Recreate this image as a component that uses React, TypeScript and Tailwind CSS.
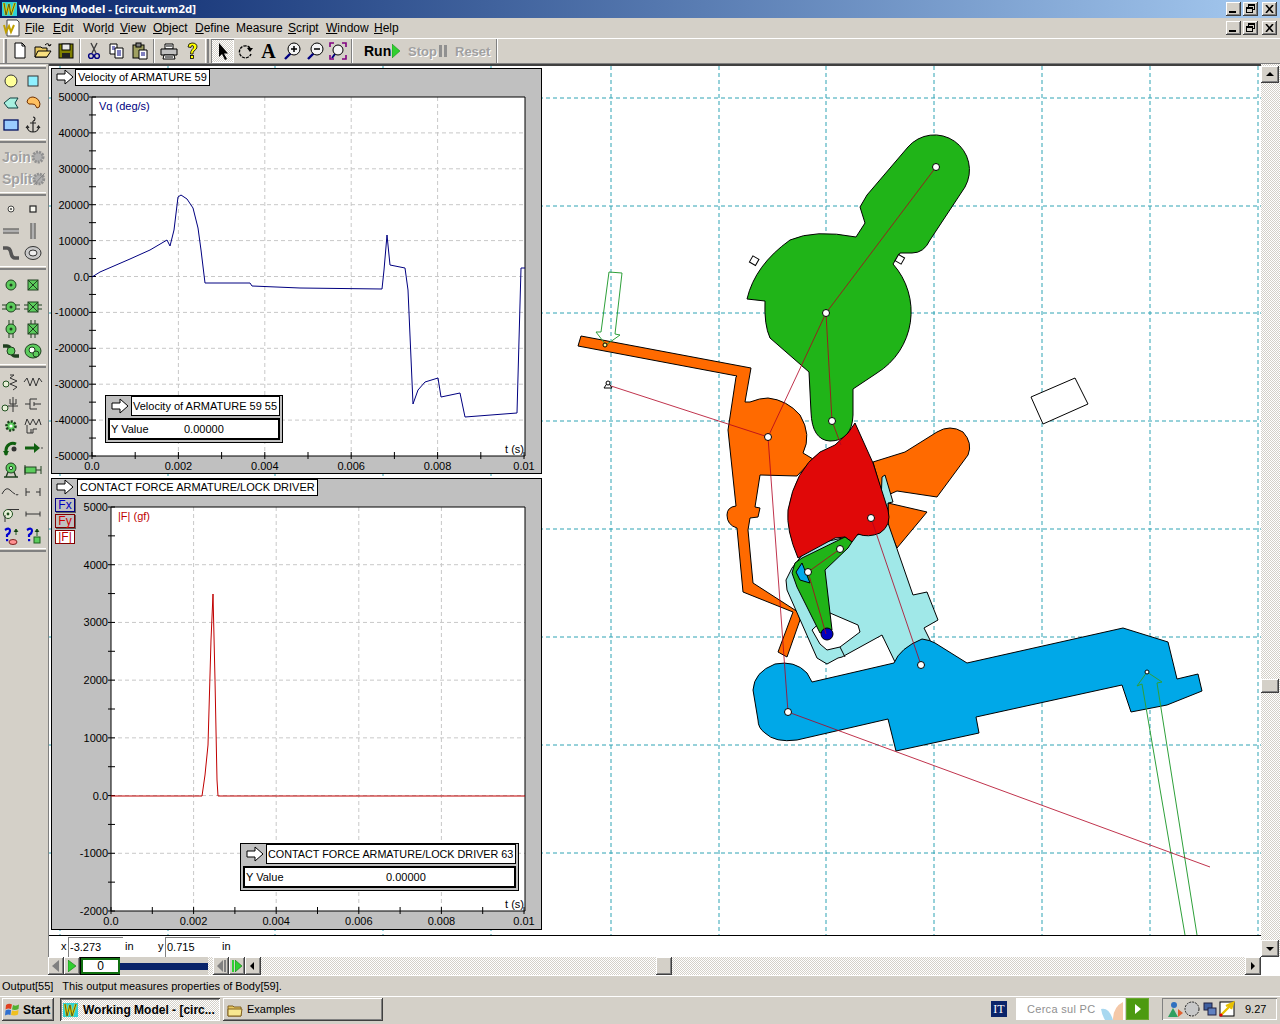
import type { ReactNode } from "react";

const raised = "bg-[#d4d0c8] shadow-[inset_-1px_-1px_0_#404040,inset_1px_1px_0_#ffffff,inset_-2px_-2px_0_#808080]";
const grip = "h-[4px] bg-[#d4d0c8] border-t border-white border-b-2 border-b-[#808080]";
const dither = "bg-[repeating-conic-gradient(#d4d0c8_0_25%,#ffffff_0_50%)] bg-[length:2px_2px]";

type Pt = [number, number];

function poly(points: Pt[]) {
  return points.map((p) => p.join(",")).join(" ");
}

function WmLogo({ size = 16 }: { size?: number }) {
  return (
    <svg width={size} height={size} viewBox="0 0 16 16">
      <rect x="0" y="1" width="15" height="14" fill="#30d0d8" />
      <path d="M2 2 L4 14 L7 3 L9 14 L13 2" fill="none" stroke="#e8d000" strokeWidth="2.4" />
      <path d="M2 2 L4 14 L7 3 L9 14 L13 2" fill="none" stroke="#203020" strokeWidth="0.7" />
    </svg>
  );
}

function WinButtons() {
  return (
    <div className="flex items-center gap-[2px]">
      <div className={`${raised} w-[15px] h-[14px] relative`}>
        <div className="absolute left-[3px] bottom-[3px] w-[7px] h-[2px] bg-black" />
      </div>
      <div className={`${raised} w-[15px] h-[14px] relative`}>
        <div className="absolute left-[5px] top-[2px] w-[7px] h-[6px] border border-black border-t-2" />
        <div className="absolute left-[3px] top-[5px] w-[7px] h-[6px] border border-black border-t-2 bg-[#d4d0c8]" />
      </div>
      <div className={`${raised} w-[15px] h-[14px] ml-[2px] flex items-center justify-center`}>
        <svg width="9" height="8" viewBox="0 0 9 8">
          <path d="M1 0 L8 8 M8 0 L1 8" stroke="#000" strokeWidth="1.6" />
        </svg>
      </div>
    </div>
  );
}

const menus = [
  { pre: "", u: "F", post: "ile", w: "w-[28px]" },
  { pre: "", u: "E", post: "dit", w: "w-[30px]" },
  { pre: "Wor", u: "l", post: "d", w: "w-[37px]" },
  { pre: "", u: "V", post: "iew", w: "w-[33px]" },
  { pre: "", u: "O", post: "bject", w: "w-[42px]" },
  { pre: "", u: "D", post: "efine", w: "w-[41px]" },
  { pre: "Measure", u: "", post: "", w: "w-[52px]" },
  { pre: "", u: "S", post: "cript", w: "w-[38px]" },
  { pre: "", u: "W", post: "indow", w: "w-[48px]" },
  { pre: "", u: "H", post: "elp", w: "w-[30px]" },
];

function Icon({ children, w = 20 }: { children: ReactNode; w?: number }) {
  return (
    <svg width={w} height="20" viewBox="0 0 20 20">
      {children}
    </svg>
  );
}

function ToolBtn({ children, active }: { children: ReactNode; active?: boolean }) {
  return (
    <div
      className={`w-[23px] h-[24px] flex items-center justify-center ${
        active ? `${dither} shadow-[inset_1px_1px_0_#808080,inset_-1px_-1px_0_#ffffff]` : ""
      }`}
    >
      {children}
    </div>
  );
}

function Sep({ w }: { w: string }) {
  return (
    <div className={`${w} h-[24px] flex justify-center`}>
      <div className="w-[2px] h-full border-l border-[#808080] border-r border-r-white" />
    </div>
  );
}

function Grip({ w }: { w: string }) {
  return (
    <div className={`${w} h-[24px] flex justify-center`}>
      <div className="w-[4px] h-full bg-[#d4d0c8] border-l border-white border-r-2 border-r-[#808080]" />
    </div>
  );
}

function TopToolbar() {
  return (
    <div className="h-[26px] flex items-center border-t border-white border-b border-b-[#808080] pl-[2px]">
      <Grip w="w-[6px]" />
      <ToolBtn>
        <Icon>
          <path d="M5 2 H12 L15 5 V17 H5 Z" fill="#fff" stroke="#000" />
          <path d="M12 2 V5 H15" fill="none" stroke="#000" />
        </Icon>
      </ToolBtn>
      <ToolBtn>
        <Icon>
          <path d="M2 6 H8 L9 7 H14 V16 H2 Z" fill="#e8c860" stroke="#000" />
          <path d="M5 10 H18 L14 16 H2 Z" fill="#f8e080" stroke="#000" />
          <path d="M12 4 Q15 1 17 5 M17 5 L18 3 M17 5 L15 4" fill="none" stroke="#000" />
        </Icon>
      </ToolBtn>
      <ToolBtn>
        <Icon>
          <rect x="3" y="3" width="14" height="14" fill="#808000" stroke="#000" />
          <rect x="6" y="3" width="8" height="6" fill="#e8e8e8" stroke="#000" />
          <rect x="6" y="12" width="8" height="5" fill="#222" />
        </Icon>
      </ToolBtn>
      <Sep w="w-[5px]" />
      <ToolBtn>
        <Icon>
          <path d="M7 2 L12 12 M13 2 L8 12" stroke="#404040" strokeWidth="1.4" />
          <circle cx="7" cy="15" r="2.4" fill="none" stroke="#000080" strokeWidth="1.4" />
          <circle cx="13" cy="15" r="2.4" fill="none" stroke="#000080" strokeWidth="1.4" />
        </Icon>
      </ToolBtn>
      <ToolBtn>
        <Icon>
          <path d="M3 3 H10 V13 H3 Z" fill="#fff" stroke="#000" />
          <path d="M8 7 H16 V17 H8 Z" fill="#fff" stroke="#000" />
          <path d="M10 10 H14 M10 12 H14 M10 14 H14 M5 6 H8 M5 8 H8" stroke="#000080" />
        </Icon>
      </ToolBtn>
      <ToolBtn>
        <Icon>
          <rect x="3" y="4" width="11" height="13" fill="#a0a060" stroke="#000" />
          <rect x="6" y="2" width="5" height="4" fill="#808080" stroke="#000" />
          <path d="M9 9 H17 V18 H9 Z" fill="#fff" stroke="#000" />
          <path d="M11 12 H15 M11 14 H15" stroke="#000080" />
        </Icon>
      </ToolBtn>
      <Sep w="w-[6px]" />
      <ToolBtn>
        <Icon>
          <path d="M6 3 H14 V8 H6 Z" fill="#fff" stroke="#000" />
          <path d="M2 8 H18 V14 H2 Z" fill="#c0c0c0" stroke="#000" />
          <path d="M5 14 H15 L16 18 H4 Z" fill="#fff" stroke="#000" />
          <path d="M7 5 H13 M6 16 H14" stroke="#000" />
        </Icon>
      </ToolBtn>
      <ToolBtn>
        <Icon>
          <path
            d="M6 6 Q6 2 10 2 Q15 2 15 6 Q15 8 12 10 Q11 11 11 13 H8.5 Q8.5 10 10 8.5 Q11.5 7.5 11.5 6 Q11.5 4.5 10 4.5 Q9 4.5 9 6.5 Z"
            fill="#ffff00"
            stroke="#000"
            strokeWidth="0.8"
          />
          <rect x="8.5" y="14.5" width="3" height="3" fill="#ffff00" stroke="#000" strokeWidth="0.8" />
        </Icon>
      </ToolBtn>
      <Grip w="w-[8px]" />
      <ToolBtn active>
        <Icon>
          <path d="M6 2 V16 L9 13 L12 19 L14 18 L11 12.5 H15 Z" fill="#000" />
        </Icon>
      </ToolBtn>
      <ToolBtn>
        <Icon>
          <path d="M14 7 A6 6 0 1 0 15 13" fill="none" stroke="#000" strokeWidth="1.4" strokeDasharray="3 1" />
          <path d="M11 7 H17 L14 11 Z" fill="#000" />
        </Icon>
      </ToolBtn>
      <ToolBtn>
        <span className="[font-family:'Liberation_Serif',serif] font-bold text-[20px] leading-none text-black">A</span>
      </ToolBtn>
      <ToolBtn>
        <Icon>
          <path d="M9 12 L3 18" stroke="#000080" strokeWidth="2.4" />
          <circle cx="12" cy="8" r="6" fill="#f4f4f4" stroke="#000" />
          <path d="M9 8 H15 M12 5 V11" stroke="#000" strokeWidth="1.5" />
        </Icon>
      </ToolBtn>
      <ToolBtn>
        <Icon>
          <path d="M9 12 L3 18" stroke="#000080" strokeWidth="2.4" />
          <circle cx="12" cy="8" r="6" fill="#f4f4f4" stroke="#000" />
          <path d="M9 8 H15" stroke="#000" strokeWidth="1.5" />
        </Icon>
      </ToolBtn>
      <ToolBtn>
        <Icon>
          <path d="M7 13 L4 17" stroke="#000080" strokeWidth="2" />
          <circle cx="10" cy="9" r="5" fill="#f4f4f4" stroke="#000" />
          <path d="M2 6 V2 H6 M14 2 H18 V6 M18 14 V18 H14 M6 18 H2 V14" fill="none" stroke="#800080" strokeWidth="1.6" />
        </Icon>
      </ToolBtn>
      <Sep w="w-[6px]" />
      <div className="ml-[9px] flex items-center gap-[1px] text-[14px] font-bold leading-none w-[44px]">
        <span>Run</span>
        <svg width="8" height="14" viewBox="0 0 8 14">
          <path d="M0 0 L8 7 L0 14 Z" fill="#30d030" stroke="#108010" strokeWidth="0.5" />
        </svg>
      </div>
      <div className="flex items-center gap-[1px] text-[13px] font-bold leading-none w-[47px] text-[#a0a0a0] [text-shadow:1px_1px_0_#ffffff]">
        <span>Stop</span>
        <div className="w-[3px] h-[12px] ml-[1px] bg-[#909090]" />
        <div className="w-[3px] h-[12px] ml-[1px] bg-[#909090]" />
      </div>
      <div className="text-[13px] font-bold leading-none w-[40px] text-[#a0a0a0] [text-shadow:1px_1px_0_#ffffff]">Reset</div>
      <Sep w="w-[4px]" />
    </div>
  );
}

const G = "#5ccc5c";
const shapeTools: ReactNode[] = [
  <circle key="a" cx="10" cy="10" r="6" fill="#ffff99" stroke="#333" />,
  <rect key="b" x="5" y="5" width="10" height="10" fill="#8ff0ff" stroke="#333" />,
  <polygon key="c" points="3,10 9,5 17,5 14,10 17,15 7,15" fill="#a8f0e0" stroke="#104040" />,
  <path key="d" d="M4 9 Q5 4 10 4 Q16 5 17 11 Q17 15 14 15 Q12 10 9 11 Q5 12 4 9 Z" fill="#ffc060" stroke="#703000" />,
  <rect key="e" x="3" y="5" width="14" height="10" fill="#99ccff" stroke="#001060" strokeWidth="1.3" />,
  <path key="f" d="M10 6 V17 M7 8 H13 M4 12 Q5 17 10 17 Q15 17 16 12 M3 13 L4.5 11 L6 13 M14 13 L15.5 11 L17 13 M10 2 A2 2 0 1 1 9.9 6" fill="none" stroke="#222" strokeWidth="1.2" />,
];

const jointTools: ReactNode[] = [
  <g key="a"><circle cx="10" cy="10" r="3" fill="#f8f8f0" stroke="#444" /><circle cx="10" cy="10" r="1" fill="#444" /></g>,
  <rect key="b" x="7" y="7" width="6" height="6" fill="#f8f8f0" stroke="#222" strokeWidth="1.2" />,
  <g key="c"><rect x="2" y="8.5" width="16" height="3" fill="#b0b0b0" /><path d="M2 8 H18 M2 12 H18" stroke="#444" /></g>,
  <g key="d"><rect x="8.5" y="2" width="3" height="16" fill="#b0b0b0" /><path d="M8 2 V18 M12 2 V18" stroke="#444" /></g>,
  <path key="e" d="M2 5 H6 Q9 5 10 10 Q11 15 14 15 H18" fill="none" stroke="#555" strokeWidth="3.6" />,
  <g key="f"><ellipse cx="10" cy="10" rx="8" ry="6.5" fill="#c8c8c8" stroke="#333" /><ellipse cx="10" cy="10" rx="4" ry="3" fill="#eee" stroke="#333" /></g>,
];

const driverTools: ReactNode[] = [
  <g key="a"><circle cx="10" cy="10" r="5" fill={G} stroke="#204020" /><circle cx="10" cy="10" r="1.5" fill="#204020" /></g>,
  <g key="b"><rect x="5" y="5" width="10" height="10" fill={G} stroke="#204020" /><path d="M5 5 L15 15 M15 5 L5 15" stroke="#204020" /></g>,
  <g key="c"><path d="M1 8 H19 M1 12 H19" stroke="#204020" /><circle cx="10" cy="10" r="5" fill={G} stroke="#204020" /><circle cx="10" cy="10" r="1.5" fill="#204020" /></g>,
  <g key="d"><path d="M1 8 H19 M1 12 H19" stroke="#204020" /><rect x="5" y="5" width="10" height="10" fill={G} stroke="#204020" /><path d="M5 5 L15 15 M15 5 L5 15" stroke="#204020" /></g>,
  <g key="e"><path d="M8 1 V19 M12 1 V19" stroke="#204020" /><circle cx="10" cy="10" r="5" fill={G} stroke="#204020" /><circle cx="10" cy="10" r="1.5" fill="#204020" /></g>,
  <g key="f"><path d="M8 1 V19 M12 1 V19" stroke="#204020" /><rect x="5" y="5" width="10" height="10" fill={G} stroke="#204020" /><path d="M5 5 L15 15 M15 5 L5 15" stroke="#204020" /></g>,
  <g key="g"><path d="M2 5 H6 Q9 5 10 10 Q11 15 14 15 H18" fill="none" stroke="#204020" strokeWidth="3.4" /><circle cx="10" cy="10" r="4" fill={G} stroke="#204020" /></g>,
  <g key="h"><ellipse cx="10" cy="10" rx="8" ry="7" fill={G} stroke="#204020" /><circle cx="9" cy="9" r="3" fill="#fff" stroke="#204020" /><circle cx="13" cy="13" r="3" fill={G} stroke="#204020" /></g>,
];

const forceTools: ReactNode[] = [
  <g key="a"><circle cx="5" cy="12" r="3" fill="#e8f0d8" stroke="#205020" /><path d="M9 3 H13 L9 6 L16 9 L9 12 L16 15 L12 18" fill="none" stroke="#333" /></g>,
  <path key="b" d="M1 10 L4 6 L7 14 L10 6 L13 14 L16 6 L19 10" fill="none" stroke="#333" />,
  <g key="c"><circle cx="4" cy="14" r="3" fill="#e8f0d8" stroke="#205020" /><path d="M7 12 H17 M12 3 V12 M9 5 V10 H15 V5 M12 12 V18" fill="none" stroke="#333" /></g>,
  <path key="d" d="M2 10 H7 M7 5 V15 M7 5 H14 M7 15 H14 M11 8 V12 M11 10 H18" fill="none" stroke="#333" />,
  <g key="e"><circle cx="10" cy="10" r="4.5" fill={G} stroke="#204020" strokeWidth="2.6" strokeDasharray="2 1.4" /><circle cx="10" cy="10" r="1.6" fill="#fff" /></g>,
  <path key="f" d="M2 9 L4 3 L7 9 L10 3 L13 9 L16 3 L18 9 M4 9 V17 H10 V13 H14 M8 13 V17" fill="none" stroke="#333" />,
  <g key="g"><path d="M15 6 A7 7 0 0 0 5 12 L5 17" fill="none" stroke="#106010" strokeWidth="3" /><path d="M2 13 H8 L5 18 Z" fill="#106010" /><circle cx="13" cy="11" r="2.5" fill="#333" /></g>,
  <g key="h"><path d="M2 10 H12" stroke="#106010" strokeWidth="3" /><path d="M11 5 L17 10 L11 15 Z" fill="#106010" /><circle cx="19" cy="10" r="0.8" fill="#333" /></g>,
  <g key="i"><circle cx="10" cy="8" r="5" fill={G} stroke="#204020" /><circle cx="10" cy="8" r="1.6" fill="#fff" stroke="#204020" /><path d="M3 17 H17 M5 17 L7 12 M15 17 L13 12" stroke="#204020" strokeWidth="1.4" /></g>,
  <g key="j"><rect x="2" y="7" width="11" height="6" fill={G} stroke="#204020" /><path d="M13 10 H18 M18 6 V14 M2 5 V15" stroke="#204020" /></g>,
  <path key="k" d="M1 12 Q5 4 9 8 Q12 11 14 12 M15 12 A1 1 0 1 0 17 12" fill="none" stroke="#333" />,
  <path key="l" d="M3 6 V14 M3 10 H7 M17 6 V14 M13 10 H17" fill="none" stroke="#333" />,
  <g key="m"><circle cx="7" cy="10" r="4.5" fill="#e8f0d8" stroke="#205020" /><circle cx="7" cy="10" r="1.4" fill="#205020" /><path d="M7 5.5 H18 M4 11 V18" stroke="#333" /></g>,
  <path key="n" d="M3 10 H17 M3 7.5 V12.5 M17 7.5 V12.5" fill="none" stroke="#333" />,
  <g key="o"><path d="M4 4 Q9 1 9 5 Q9 7 6 9 V11" fill="none" stroke="#0000d0" strokeWidth="2.2" /><rect x="5" y="13" width="2.2" height="2.2" fill="#0000d0" /><ellipse cx="12" cy="16" rx="4" ry="2.5" fill="#ff9090" stroke="#802020" /><path d="M15 3 V9 M13 6 L15 3 L17 6" stroke="#206020" /></g>,
  <g key="p"><path d="M4 4 Q9 1 9 5 Q9 7 6 9 V11" fill="none" stroke="#0000d0" strokeWidth="2.2" /><rect x="5" y="13" width="2.2" height="2.2" fill="#0000d0" /><rect x="11" y="11" width="6" height="6" fill={G} stroke="#206020" /><path d="M14 3 V10 M12 6 L14 3 L16 6" stroke="#206020" /></g>,
];

function ToolGrid({ items }: { items: ReactNode[] }) {
  return (
    <div className="grid grid-cols-[22px_22px] auto-rows-[22px] place-items-center">
      {items.map((item, i) => (
        <Icon key={i}>{item}</Icon>
      ))}
    </div>
  );
}

function Toolbox() {
  return (
    <div className="w-[48px] shrink-0 pt-[1px] pr-[2px]">
      <div className={grip} />
      <div className="pt-[1px] pb-[3px]">
        <ToolGrid items={shapeTools} />
      </div>
      <div className={grip} />
      <div className="pt-[3px] pb-[2px] text-[14px] font-bold text-[#a0a0a0] [text-shadow:1px_1px_0_#ffffff]">
        <div className="h-[22px] flex items-center pl-[2px]">
          Join
          <svg width="14" height="14" viewBox="0 0 14 14">
            <circle cx="7" cy="7" r="5" fill="#b0b0b0" stroke="#909090" strokeDasharray="2 1" strokeWidth="3" />
          </svg>
        </div>
        <div className="h-[22px] flex items-center pl-[2px]">
          Split
          <svg width="14" height="14" viewBox="0 0 14 14">
            <circle cx="7" cy="7" r="5" fill="#b0b0b0" stroke="#909090" strokeDasharray="2 1" strokeWidth="3" />
            <path d="M2 13 L13 1" stroke="#808080" />
          </svg>
        </div>
      </div>
      <div className={grip} />
      <div className="pt-[2px] pb-[2px]">
        <ToolGrid items={jointTools} />
      </div>
      <div className={grip} />
      <div className="pt-[4px] pb-[2px]">
        <ToolGrid items={driverTools} />
      </div>
      <div className={grip} />
      <div className="pt-[3px] pb-[1px]">
        <ToolGrid items={forceTools} />
      </div>
      <div className={grip} />
    </div>
  );
}

const pinsWhite: Pt[] = [
  [936, 167],
  [826, 313],
  [832, 421],
  [768, 437],
  [871, 518],
  [840, 549],
  [808, 572],
  [921, 665],
  [788, 712],
];

const bodyGreen =
  "M908 147 A35 35 0 0 1 965 187 L930 240 Q924 253 912 253 L900 253 L893 264 A72 72 0 0 1 877 373 L853 389 L853 415 Q852 441 830 441 Q812 440 811 412 L809 372 L770 338 Q764 325 765 301 L747 299 Q755 265 790 240 Q815 229 856 237 L865 223 L860 207 L867 195 Z";
const bodyRed =
  "M855 423 L873 463 L888 510 Q892 525 880 533 Q868 538 858 534 L852 542 L845 537 L835 538 L798 558 Q786 530 788 510 Q795 470 820 452 L835 445 L848 433 Z";
const orangeLeft =
  "M581 336 L751 368 L745 402 L750 402 Q760 398 768 398 Q787 400 800 415 Q812 435 803 453 L813 459 L797 476 L760 475 L755 507 L760 508 L758 517 L750 518 L748 530 L753 583 L798 612 L800 620 L787 657 L778 652 L793 612 L743 592 L737 528 Q727 525 727 515 Q727 507 736 506 L728 430 L736 377 L737 376 L578 346 Z";
const orangeRight =
  "M873 462 L905 452 L937 432 Q950 424 963 432 Q973 443 968 455 L937 497 L897 491 L888 495 L880 487 Z";
const cyanBody =
  "M882 477 L885 475 L893 502 L888 503 L888 523 L913 595 L927 592 L938 620 L924 628 L930 640 L930 665 L895 662 L882 635 L842 657 L838 658 L827 664 L817 658 L787 590 L786 580 L792 568 L810 545 L880 530 Z";
const cutout = "M830 613 L858 625 L860 632 L840 647 L827 650 L820 644 L812 630 Z";
const greenLever =
  "M845 537 L852 542 L848 548 L825 570 L832 630 L820 633 L797 587 L792 573 L795 563 L802 558 Z";
const bodyBlue =
  "M812 682 L894 663 Q900 648 922 639 Q930 640 935 643 L967 663 L1123 628 L1168 642 L1177 679 L1198 674 L1202 691 L1167 705 L1131 712 L1122 685 L976 717 L979 733 L896 751 L888 719 L797 740 Q775 743 765 733 Q758 728 758 720 L753 690 Q754 672 775 664 Q795 660 807 673 Z";

function Mechanism() {
  const vx = [60, 168, 275, 383, 491, 611, 719, 826, 934, 1042, 1150, 1258];
  const hy = [98, 206, 313, 421, 529, 637, 745, 853];
  return (
    <svg className="absolute inset-0" width="1212" height="869" viewBox="49 66 1212 869">
      {vx.map((x) => (
        <line key={x} x1={x} x2={x} y1="66" y2="935" stroke="#2ea3b4" strokeDasharray="4 3" />
      ))}
      {hy.map((y) => (
        <line key={y} x1="49" x2="1261" y1={y} y2={y} stroke="#2ea3b4" strokeDasharray="4 3" />
      ))}

      <g stroke="#000" strokeWidth="1">
        <path d={orangeRight} fill="#ff6a00" />
        <polygon points="888,503 927,512 897,548 888,527" fill="#ff6a00" />
        <path d={orangeLeft} fill="#ff6a00" />
        <path d={cyanBody} fill="#a0e8e8" />
        <path d={cutout} fill="#fff" />
        <path d="M840 647 L845 657" stroke="#000" fill="none" />
        <path d={bodyGreen} fill="#20b418" />
        <path d={bodyRed} fill="#e00808" />
        <path d={greenLever} fill="#20b418" />
        <path d="M802 563 L810 583 L800 580 L796 572 Z" fill="#00a8e8" />
        <path d={bodyBlue} fill="#00a8e8" />
        <circle cx="827" cy="634" r="6" fill="#0000c0" />
      </g>

      <polygon points="1031,397 1075,378 1088,404 1043,424" fill="#fff" stroke="#000" />
      <rect x="751" y="257" width="7" height="7" transform="rotate(30 754 260)" fill="#fff" stroke="#000" />
      <rect x="896" y="256" width="7" height="7" transform="rotate(30 900 260)" fill="#fff" stroke="#000" />

      <g fill="none" stroke="#2ea03a">
        <polyline points={poly([[609, 272], [622, 273], [615, 334], [620, 335], [606, 345], [596, 332], [601, 332], [609, 272]])} />
        <polyline points={poly([[1185, 935], [1142, 684], [1137, 686], [1147, 672], [1162, 682], [1157, 683], [1197, 935]])} />
      </g>

      <g fill="none" stroke="#b00020" strokeOpacity="0.8">
        <polyline points={poly([[608, 385], [768, 437], [826, 313], [936, 167]])} />
        <polyline points={poly([[768, 437], [788, 712], [1210, 867]])} />
        <polyline points={poly([[826, 313], [832, 421], [841, 445]])} />
        <polyline points={poly([[871, 518], [921, 665]])} />
        <polyline points={poly([[840, 549], [808, 572], [826, 634]])} />
      </g>

      {pinsWhite.map(([x, y]) => (
        <circle key={x} cx={x} cy={y} r="3.5" fill="#fff" stroke="#000" />
      ))}
      <circle cx="1147" cy="672" r="2" fill="#fff" stroke="#000" />
      <circle cx="605" cy="345" r="2" fill="#ffff99" stroke="#000" />
      <g fill="#fff" stroke="#000">
        <path d="M604 388 L612 388 L608 382 Z" />
        <circle cx="608" cy="383" r="2" />
      </g>
    </svg>
  );
}

type ChartProps = {
  viewBox: string;
  width: string;
  height: string;
  vbW: number;
  vbH: number;
  left: number;
  right: number;
  top: number;
  bottom: number;
  yLabels: string[];
  title: string;
  color: string;
  points: Pt[];
};

function Chart({ viewBox, width, height, vbW, vbH, left, right, top, bottom, yLabels, title, color, points }: ChartProps) {
  const xLabels = ["0.0", "0.002", "0.004", "0.006", "0.008", "0.01"];
  const xStep = (right - 1 - left) / 10;
  const yStep = (bottom - top) / (yLabels.length - 1);
  const xTicks = Array.from({ length: 11 }, (_, i) => left + i * xStep);
  const yTicks = Array.from({ length: (yLabels.length - 1) * 2 + 1 }, (_, i) => top + (i * yStep) / 2);
  return (
    <svg className={`block ${width} ${height}`} width={vbW} height={vbH} viewBox={viewBox} fontSize="11" fontFamily="'Liberation Sans', sans-serif">
      <rect x={left} y={top} width={right - left} height={bottom - top} fill="#fff" />
      {xLabels.slice(1, -1).map((_, i) => (
        <line key={i} x1={left + (i + 1) * 2 * xStep} x2={left + (i + 1) * 2 * xStep} y1={top} y2={bottom} stroke="#c8c8c8" strokeDasharray="4 3" />
      ))}
      {yLabels.slice(1, -1).map((_, i) => (
        <line key={i} x1={left} x2={right} y1={top + (i + 1) * yStep} y2={top + (i + 1) * yStep} stroke="#c8c8c8" strokeDasharray="4 3" />
      ))}
      <path d={`M${left} ${top} H${right} V${bottom} H${left} Z`} fill="none" stroke="#000" />
      {yTicks.map((y, i) => (
        <line key={i} x1={left - 3} x2={left + 4} y1={y} y2={y} stroke="#000" />
      ))}
      {xTicks.map((x, i) => (
        <line key={i} x1={x} x2={x} y1={bottom - 4} y2={bottom + 3} stroke="#000" />
      ))}
      {yLabels.map((label, i) => (
        <text key={label} x={left - 3} y={top + i * yStep + 4} textAnchor="end">
          {label}
        </text>
      ))}
      {xLabels.map((label, i) => (
        <text key={label} x={left + i * 2 * xStep} y={bottom + 14} textAnchor="middle">
          {label}
        </text>
      ))}
      <text x={left + 7} y={top + 13} fill={color}>
        {title}
      </text>
      <text x={right - 1} y={bottom - 3} textAnchor="end">
        t (s)
      </text>
      <polyline points={poly(points)} fill="none" stroke={color} />
    </svg>
  );
}

function ArrowGlyph() {
  return (
    <svg width="18" height="16" viewBox="0 0 18 16" className="shrink-0">
      <path d="M1 5 H9 V1 L17 8 L9 15 V11 H1 Z" fill="#fff" stroke="#000" />
    </svg>
  );
}

function ValueRow({ offset, value }: { offset: string; value: string }) {
  return (
    <div className="h-[22px] flex items-center border-2 border-black bg-white pl-[1px]">
      <span className={offset}>Y Value</span>
      <span>{value}</span>
    </div>
  );
}

const velocityPts: Pt[] = [
  [92, 277], [100, 272], [130, 259], [150, 250], [167, 240], [170, 246], [174, 230], [178, 197], [181, 195], [187, 199], [193, 208], [198, 228], [201, 250], [205, 283], [250, 283], [252, 286], [300, 288], [382, 289], [384, 270], [387, 235], [390, 265], [405, 268], [408, 290], [413, 404], [418, 390], [425, 382], [438, 378], [441, 397], [460, 393], [465, 417], [517, 413], [519, 340], [521, 268], [525, 268],
];
const forcePts: Pt[] = [
  [111, 796], [202, 796], [205, 775], [208, 745], [211, 640], [213, 594], [215, 680], [217, 780], [218, 796], [525, 796],
];

function Panels() {
  return (
    <div className="relative flex flex-col gap-[4px] pl-[2px] pt-[2px] w-fit text-[11px] leading-none">
      <div className="relative w-[491px] h-[406px] border border-black bg-[#c0c0c0]">
        <div className="h-[18px] flex items-start pl-[4px] gap-[1px]">
          <ArrowGlyph />
          <div className="h-[17px] px-[2px] flex items-center bg-white border border-black">Velocity of ARMATURE 59</div>
        </div>
        <Chart
          viewBox="52 87 489 386"
          width="w-[489px]"
          height="h-[386px]"
          vbW={489}
          vbH={386}
          left={92}
          right={525}
          top={97}
          bottom={456}
          yLabels={["50000", "40000", "30000", "20000", "10000", "0.0", "-10000", "-20000", "-30000", "-40000", "-50000"]}
          title="Vq (deg/s)"
          color="#000080"
          points={velocityPts}
        />
        <div className="absolute left-[53px] top-[326px] w-[178px] h-[48px] bg-[#c0c0c0] border border-black px-[2px]">
          <div className="h-[20px] flex items-center gap-[2px] pl-[3px]">
            <ArrowGlyph />
            <div className="flex-1 h-full flex items-center bg-white border border-black pl-[1px] whitespace-nowrap">Velocity of ARMATURE 59 55</div>
          </div>
          <div className="mt-[2px]">
            <ValueRow offset="w-[73px]" value="0.00000" />
          </div>
        </div>
      </div>

      <div className="relative w-[491px] h-[452px] border border-black bg-[#c0c0c0]">
        <div className="h-[18px] flex items-start pl-[4px] gap-[3px]">
          <ArrowGlyph />
          <div className="h-[17px] px-[2px] flex items-center bg-white border border-black">CONTACT FORCE ARMATURE/LOCK DRIVER</div>
        </div>
        <div className="flex">
          <div className="w-[24px] pl-[3px] flex flex-col gap-[2px] pt-[1px] text-[12px]">
            <div className="w-[20px] h-[14px] flex items-center justify-center border border-[#000080] text-[#0000c0] shadow-[1px_1px_0_#606060]">Fx</div>
            <div className="w-[20px] h-[14px] flex items-center justify-center border border-[#800000] text-[#d00000] shadow-[1px_1px_0_#606060]">Fy</div>
            <div className="w-[20px] h-[14px] flex items-center justify-center border border-[#800000] bg-white text-[#c00000]">|F|</div>
          </div>
          <Chart
            viewBox="76 497 465 432"
            width="w-[465px]"
            height="h-[432px]"
            vbW={465}
            vbH={432}
            left={111}
            right={525}
            top={507}
            bottom={911}
            yLabels={["5000", "4000", "3000", "2000", "1000", "0.0", "-1000", "-2000"]}
            title="|F| (gf)"
            color="#c00000"
            points={forcePts}
          />
        </div>
        <div className="absolute left-[188px] top-[364px] w-[279px] h-[48px] bg-[#c0c0c0] border border-black px-[2px]">
          <div className="h-[20px] flex items-center gap-[2px] pl-[3px]">
            <ArrowGlyph />
            <div className="flex-1 h-full flex items-center bg-white border border-black pl-[1px] whitespace-nowrap text-[10.8px]">CONTACT FORCE ARMATURE/LOCK DRIVER 63</div>
          </div>
          <div className="mt-[2px]">
            <ValueRow offset="w-[140px]" value="0.00000" />
          </div>
        </div>
      </div>
    </div>
  );
}

function ArrowBtn({ dir, w, h }: { dir: "up" | "down" | "left" | "right"; w: string; h: string }) {
  const paths = { up: "M1 6 L5 2 L9 6 Z", down: "M1 3 L5 7 L9 3 Z", left: "M6 1 L2 5 L6 9 Z", right: "M3 1 L7 5 L3 9 Z" };
  return (
    <div className={`${raised} ${w} ${h} shrink-0 flex items-center justify-center`}>
      <svg width="10" height="10" viewBox="0 0 10 10">
        <path d={paths[dir]} fill="#000" />
      </svg>
    </div>
  );
}

function PlaybackBar() {
  return (
    <div className="h-[18px] flex">
      <div className={`flex-1 flex items-center ${dither}`}>
        <div className={`${raised} w-[16px] h-[18px] flex items-center justify-center`}>
          <svg width="8" height="12" viewBox="0 0 8 12"><path d="M7 0 L0 6 L7 12 Z" fill="#808080" /></svg>
        </div>
        <div className={`${raised} w-[16px] h-[18px] flex items-center justify-center`}>
          <svg width="8" height="12" viewBox="0 0 8 12"><path d="M0 0 L8 6 L0 12 Z" fill="#30d030" stroke="#107010" strokeWidth="0.6" /></svg>
        </div>
        <div className="w-[39px] h-[16px] ml-[1px] bg-white border-2 border-[#107010] outline outline-black flex items-center justify-center text-[12px] leading-none">0</div>
        <div className="w-[88px] h-[18px] bg-[#d4d0c8] flex items-center">
          <div className="w-[88px] h-[7px] bg-[#0a246a]" />
        </div>
        <div className={`${raised} w-[16px] h-[18px] ml-[5px] flex items-center justify-center gap-[1px]`}>
          <svg width="6" height="12" viewBox="0 0 6 12"><path d="M6 0 L0 6 L6 12 Z" fill="#808080" /></svg>
          <div className="w-[2px] h-[12px] bg-[#808080]" />
        </div>
        <div className={`${raised} w-[16px] h-[18px] flex items-center justify-center gap-[1px]`}>
          <div className="w-[2px] h-[12px] bg-[#30d030]" />
          <svg width="7" height="12" viewBox="0 0 7 12"><path d="M0 0 L7 6 L0 12 Z" fill="#30d030" stroke="#107010" strokeWidth="0.6" /></svg>
        </div>
        <ArrowBtn dir="left" w="w-[16px]" h="h-[18px]" />
        <div className="w-[395px]" />
        <div className={`${raised} w-[16px] h-[18px]`} />
        <div className="flex-1" />
        <ArrowBtn dir="right" w="w-[16px]" h="h-[18px]" />
      </div>
      <div className="w-[19px] bg-white" />
    </div>
  );
}

function Taskbar() {
  return (
    <div className="h-[28px] flex items-start pt-[1px] border-t border-white pl-[2px] pr-[3px] text-[12px] leading-none">
      <div className={`${raised} w-[52px] h-[23px] flex items-center pl-[3px] gap-[3px] font-bold`}>
        <svg width="15" height="15" viewBox="0 0 15 15">
          <path d="M1 3 Q4 1 7 2.5 L6 7 Q3 6 0.5 7.5 Z" fill="#e04020" />
          <path d="M8 3 Q11 4.5 14 2.5 L13.5 7 Q10.5 8.5 7 7.5 Z" fill="#50b030" />
          <path d="M0.5 8.5 Q3 7 6 8 L5.5 13 Q3 12 0 13.5 Z" fill="#3070d0" />
          <path d="M7 8.5 Q10 9.5 13.5 8 L13 12.5 Q10 14 6 13 Z" fill="#f0c020" />
        </svg>
        Start
      </div>
      <div className="w-[5px]" />
      <div className={`w-[160px] h-[23px] ml-[1px] flex items-center pl-[3px] gap-[4px] font-bold whitespace-nowrap ${dither} shadow-[inset_1px_1px_0_#404040,inset_-1px_-1px_0_#ffffff,inset_2px_2px_0_#808080]`}>
        <WmLogo />
        Working Model - [circ...
      </div>
      <div className={`${raised} w-[160px] h-[23px] ml-[3px] flex items-center pl-[4px] gap-[4px] text-[11px]`}>
        <svg width="16" height="14" viewBox="0 0 16 14">
          <path d="M1 3 H6 L7 4 H14 V13 H1 Z" fill="#e8c860" stroke="#806020" />
          <path d="M1 6 H15 L14 13 H1 Z" fill="#f8e890" stroke="#806020" />
        </svg>
        Examples
      </div>
      <div className="flex-1" />
      <div className="w-[16px] h-[16px] mt-[3px] bg-[#0a246a] text-white flex items-center justify-center [font-family:'Liberation_Serif',serif]">IT</div>
      <div className="w-[109px] h-[22px] ml-[9px] bg-white flex items-center pl-[11px] text-[11px] text-[#909090] overflow-hidden relative tracking-[0.3px]">
        Cerca sul PC
        <svg className="absolute right-0 top-[3px]" width="24" height="19" viewBox="0 0 24 19">
          <path d="M0 8 Q8 6 12 19 H4 Q1 14 0 8 Z" fill="#a8d8f0" />
          <path d="M22 1 Q12 6 12 19 H22 Z" fill="#f4c8a8" />
        </svg>
      </div>
      <div className="w-[23px] h-[22px] ml-[1px] bg-[#4c9a10] border border-[#6aa830] flex items-center justify-center">
        <svg width="8" height="10" viewBox="0 0 8 10"><path d="M1 0 L7 5 L1 10 Z" fill="#fff" /></svg>
      </div>
      <div className="w-[115px] h-[22px] ml-[13px] flex items-center pl-[3px] text-[11px] shadow-[inset_1px_1px_0_#808080,inset_-1px_-1px_0_#ffffff]">
        <svg width="72" height="18" viewBox="0 0 72 18">
          <circle cx="9" cy="5" r="3" fill="#3070c0" />
          <path d="M3 17 L8 8 L13 17 Z" fill="#30a060" />
          <path d="M13 9 L18 13 L13 17 Z" fill="#e06030" />
          <circle cx="27" cy="9" r="7" fill="#c8c8c8" stroke="#222" strokeDasharray="2 1" />
          <rect x="39" y="3" width="8" height="7" fill="#4060a0" stroke="#202040" />
          <rect x="43" y="8" width="8" height="7" fill="#6080c0" stroke="#202040" />
          <rect x="55" y="2" width="14" height="14" fill="#fff" stroke="#000" />
          <path d="M56 15 L66 5 M61 6 L68 3 L66 9" stroke="#e8c000" strokeWidth="2.4" fill="none" />
          <circle cx="56" cy="15" r="1.6" fill="#e00000" />
        </svg>
        <span className="ml-[8px]">9.27</span>
      </div>
    </div>
  );
}

export default function App() {
  return (
    <div className="w-[1280px] h-[1024px] overflow-hidden flex flex-col bg-[#d4d0c8] text-black text-[12px] [font-family:'Liberation_Sans',sans-serif]">
      <div className="h-[18px] flex items-center justify-between pl-[2px] pr-[3px] bg-gradient-to-r from-[#0a246a] to-[#a6caf0]">
        <div className="flex items-center gap-[1px] text-white font-bold [font-family:'Noto_Sans',sans-serif] text-[11.4px] leading-none">
          <WmLogo />
          <span>Working Model - [circuit.wm2d]</span>
        </div>
        <WinButtons />
      </div>

      <div className="h-[20px] flex items-center justify-between pl-[3px] pr-[3px]">
        <div className="flex items-center">
          <div className="w-[22px] h-[18px]">
            <svg width="18" height="18" viewBox="0 0 18 18">
              <path d="M4 1 H14 L16 3 V17 H4 Z" fill="#fff" stroke="#444" />
              <path d="M1 6 L3 13 L6 7 L8 13 L11 6" fill="none" stroke="#c0a000" strokeWidth="2" />
            </svg>
          </div>
          {menus.map((m) => (
            <div key={m.pre + m.u} className={`${m.w} whitespace-nowrap`}>
              {m.pre}
              <span className="underline">{m.u}</span>
              {m.post}
            </div>
          ))}
        </div>
        <WinButtons />
      </div>

      <TopToolbar />

      <div className="flex-1 flex min-h-0">
        <Toolbox />
        <div className="flex-1 flex flex-col min-w-0">
          <div className="h-[893px] flex">
            <div className="flex-1 flex flex-col border-l border-[#808080] min-w-0">
              <div className="relative h-[872px] bg-white border-t-2 border-[#404040] border-b border-b-black">
                <Mechanism />
                <Panels />
              </div>
              <div className="flex-1 bg-white flex items-center pl-[12px] text-[11px]">
                <span className="w-[6px]">x</span>
                <div className="w-[55px] h-[20px] ml-[1px] pl-[1px] flex items-center border-l border-t border-[#808080]">-3.273</div>
                <span className="w-[35px] pl-[2px]">in</span>
                <span className="w-[7px]">y</span>
                <div className="w-[55px] h-[20px] pl-[1px] flex items-center border-l border-t border-[#808080]">0.715</div>
                <span className="ml-[2px]">in</span>
              </div>
            </div>
            <div className={`w-[19px] flex flex-col ${dither}`}>
              <div className="h-[2px]" />
              <ArrowBtn dir="up" w="w-[18px]" h="h-[17px]" />
              <div className="h-[596px]" />
              <div className={`${raised} w-[18px] h-[14px]`} />
              <div className="flex-1" />
              <ArrowBtn dir="down" w="w-[18px]" h="h-[17px]" />
            </div>
          </div>
          <PlaybackBar />
        </div>
      </div>

      <div className="h-[21px] flex items-center pl-[2px] whitespace-pre border-t border-white text-[11px]">Output[55]   This output measures properties of Body[59].</div>
      <Taskbar />
    </div>
  );
}
